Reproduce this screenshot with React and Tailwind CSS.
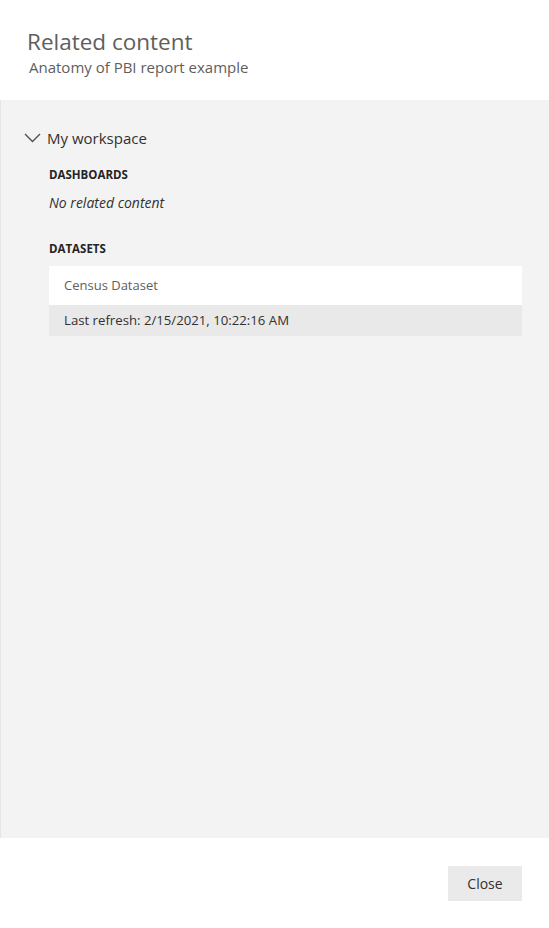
import React from "react";

function Chevron() {
  return (
    <svg width="17" height="10" viewBox="0 0 17 10" fill="none" className="shrink-0">
      <path d="M1 1l7.5 7.5L16 1" stroke="#505050" strokeWidth="1.4" />
    </svg>
  );
}

export default function App() {
  return (
    <div
      className="w-[549px] h-[928px] bg-white flex flex-col text-[#323130]"
      style={{ fontFamily: '"Open Sans", "Noto Sans", sans-serif' }}
    >
      <div className="h-[100px] pl-[27px] pt-[27px]">
        <h1 className="text-[22.5px] leading-[30px] text-[#605e5c]">Related content</h1>
        <p className="text-[15px] leading-[20px] text-[#605e5c] pl-[2px]">Anatomy of PBI report example</p>
      </div>

      <div className="flex-1 bg-[#f3f3f3] border-l border-[#e6e6e6] pl-[23px] pr-[27px] pt-[26px]">
        <div className="flex items-center gap-[6px] h-[24px]">
          <Chevron />
          <span className="text-[15px] text-[#323130]">My workspace</span>
        </div>

        <div className="pl-[25px]">
          <div className="mt-[16px] text-[11.5px] font-bold text-[#252423] leading-[18px]">DASHBOARDS</div>
          <div className="mt-[9px] text-[14px] italic text-[#323130] leading-[20px]">No related content</div>

          <div className="mt-[27px] text-[11.5px] font-bold text-[#252423] leading-[18px]">DATASETS</div>
          <div className="mt-[8px]">
            <div className="h-[39px] bg-white flex items-center pl-[15px] text-[13px] text-[#605e5c]">Census Dataset</div>
            <div className="h-[31px] bg-[#e9e9e9] flex items-center pl-[15px] text-[13.2px] text-[#323130]">
              Last refresh: 2/15/2021, 10:22:16 AM
            </div>
          </div>
        </div>
      </div>

      <div className="h-[90px] flex justify-end items-start pt-[28px] pr-[27px]">
        <button className="w-[74px] h-[35px] bg-[#eaeaea] text-[14px] text-[#323130]">Close</button>
      </div>
    </div>
  );
}
